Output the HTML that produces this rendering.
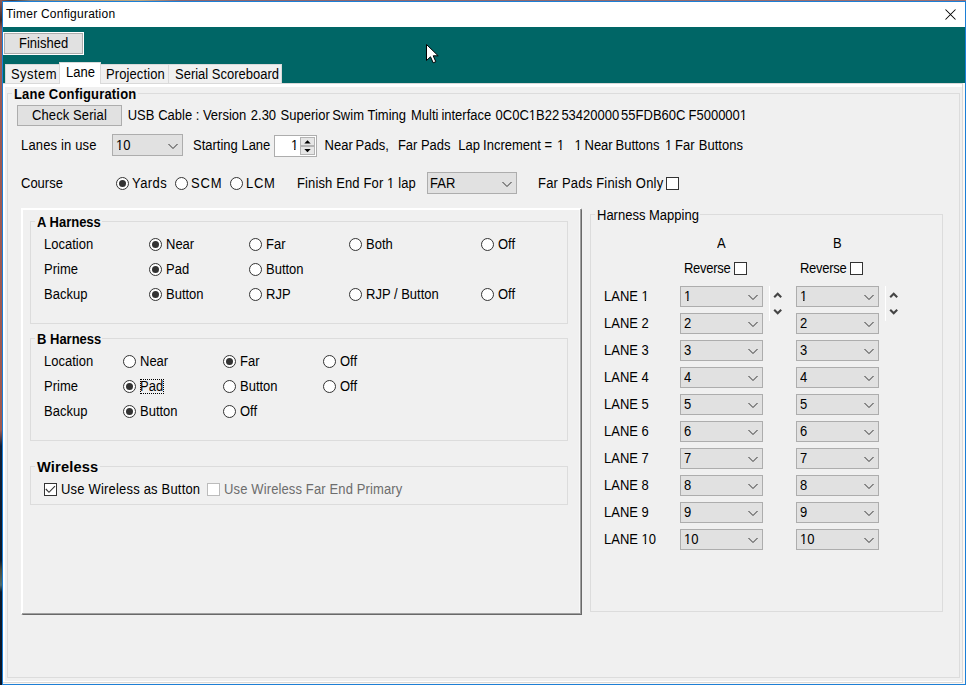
<!DOCTYPE html>
<html><head><meta charset="utf-8"><style>
html,body{margin:0;padding:0;}
body{width:966px;height:685px;position:relative;overflow:hidden;background:#f0f0f0;font-family:"Liberation Sans",sans-serif;font-size:13px;color:#000;}
.a{position:absolute;}
.t{position:absolute;white-space:pre;line-height:15px;font-size:13px;transform:scaleY(1.1);transform-origin:0 12px;}
.o{display:inline-block;clip-path:polygon(0 0,100% 0,100% 10.9px,4.5px 10.9px,4.5px 100%,3.2px 100%,3.2px 10.9px,0 10.9px);}
</style></head><body>

<div class="a" style="left:0px;top:0px;width:966px;height:1px;background:linear-gradient(90deg,#8a5a50 0px,#4a3a3a 12px,#808080 30px,#a89070 60px,#c0a880 140px,#8c6670 180px,#906a70 600px,#a07070 966px);"></div>
<div class="a" style="left:0px;top:0px;width:2px;height:685px;background:linear-gradient(180deg,#8f5a58 0px,#3a2a2a 20px,#9a5a55 30px,#a05a50 430px,#102038 446px,#0c1a2c 560px,#4a4a38 570px,#506a6a 585px,#0c1a2c 592px,#0a1628 685px);"></div>
<div class="a" style="left:2px;top:1px;width:964px;height:684px;box-sizing:border-box;border:1px solid #1c7fd6;"></div>
<div class="a" style="left:3px;top:2px;width:962px;height:25px;background:#fff;"></div>
<div class="t" style="left:6px;top:7px;font-size:12px;line-height:14px;transform:none;letter-spacing:0.23px;">Timer Configuration</div>
<svg class="a" style="left:944px;top:8px" width="13" height="13" viewBox="0 0 13 13"><path d="M1.5 1.5 L11.5 11.5 M11.5 1.5 L1.5 11.5" stroke="#000" stroke-width="1.05"/></svg>
<div class="a" style="left:3px;top:27px;width:962px;height:56px;background:#006666;"></div>
<div class="a" style="left:3px;top:32px;width:81px;height:23px;box-sizing:border-box;border:1px solid #fff;"></div>
<div class="a" style="left:4px;top:33px;width:79px;height:21px;box-sizing:border-box;border:1px solid #adadad;background:#e1e1e1;"></div>
<div class="t" style="left:19px;top:36px;">Finished</div>
<div class="a" style="left:5px;top:64px;width:55px;height:20px;box-sizing:border-box;border:1px solid #d9d9d9;border-right:none;background:#f0f0f0;"></div>
<div class="a" style="left:100px;top:64px;width:69px;height:20px;box-sizing:border-box;border:1px solid #d9d9d9;border-left:none;border-right:none;background:#f0f0f0;"></div>
<div class="a" style="left:168px;top:64px;width:114px;height:20px;box-sizing:border-box;border:1px solid #d9d9d9;background:#f0f0f0;"></div>
<div class="a" style="left:3px;top:83px;width:962px;height:601px;background:#fcf8f4;"></div>
<div class="a" style="left:3px;top:83px;width:960px;height:600px;box-sizing:border-box;border:1px solid #d9d9d9;border-left:none;"></div>
<div class="a" style="left:3px;top:84px;width:959px;height:598px;background:#fff;"></div>
<div class="a" style="left:5px;top:87px;width:957px;height:594px;background:#f0f0f0;"></div>
<div class="a" style="left:59px;top:62px;width:42px;height:22px;box-sizing:border-box;border:1px solid #d9d9d9;border-bottom:none;background:#fff;"></div>
<div class="a" style="left:60px;top:83px;width:40px;height:4px;background:#fff;"></div>
<div class="t" style="left:11px;top:67px;letter-spacing:0.45px;">System</div>
<div class="t" style="left:66px;top:65px;">Lane</div>
<div class="t" style="left:106px;top:67px;letter-spacing:0.1px;">Projection</div>
<div class="t" style="left:175px;top:67px;">Serial Scoreboard</div>
<div class="a" style="left:7px;top:93px;width:953px;height:585px;box-sizing:border-box;border:1px solid #dcdcdc;"></div>
<div class="a" style="left:12px;top:93px;width:126px;height:1px;background:#f0f0f0;"></div>
<div class="t" style="left:14px;top:87px;font-weight:700;letter-spacing:0.18px;">Lane Configuration</div>
<div class="a" style="left:17px;top:105px;width:105px;height:21px;box-sizing:border-box;border:1px solid #adadad;background:#e1e1e1;"></div>
<div class="t" style="left:32px;top:108px;letter-spacing:0.1px;">Check Serial</div>
<div class="t" style="left:127.7px;top:108px;">USB</div>
<div class="t" style="left:158.2px;top:108px;">Cable</div>
<div class="t" style="left:195.8px;top:108px;">:</div>
<div class="t" style="left:202.9px;top:108px;">Version</div>
<div class="t" style="left:250.8px;top:108px;">2.30</div>
<div class="t" style="left:280.6px;top:108px;">Superior</div>
<div class="t" style="left:332.2px;top:108px;">Swim</div>
<div class="t" style="left:367.5px;top:108px;">Timing</div>
<div class="t" style="left:411px;top:108px;">Multi</div>
<div class="t" style="left:441.4px;top:108px;">interface</div>
<div class="t" style="left:495.6px;top:108px;">0C0C<span class="o">1</span>B22</div>
<div class="t" style="left:561.4px;top:108px;">53420000</div>
<div class="t" style="left:621.1px;top:108px;">55FDB60C</div>
<div class="t" style="left:688.5px;top:108px;">F500000<span class="o">1</span></div>
<div class="t" style="left:21px;top:138px;letter-spacing:0.16px;">Lanes in use</div>
<div class="a" style="left:112px;top:134px;width:71px;height:22px;box-sizing:border-box;border:1px solid #adadad;background:#e1e1e1;"></div>
<svg class="a" style="left:168px;top:141.7px" width="10" height="8" viewBox="0 0 10 8"><path d="M0.5 2 L5 6.5 L9.5 2" fill="none" stroke="#333" stroke-width="1"/></svg>
<div class="t" style="left:116px;top:138px;"><span class="o">1</span>0</div>
<div class="t" style="left:193px;top:138px;">Starting Lane</div>
<div class="a" style="left:274px;top:135px;width:43px;height:22px;box-sizing:border-box;border:1px solid #adadad;background:#fff;"></div>
<div class="a" style="left:300px;top:137px;width:15px;height:9px;box-sizing:border-box;border:1px solid #b4b4b4;background:#e6e6e6;"></div>
<div class="a" style="left:300px;top:146px;width:15px;height:9px;box-sizing:border-box;border:1px solid #b4b4b4;background:#e6e6e6;"></div>
<svg class="a" style="left:300px;top:137px" width="15" height="18" viewBox="0 0 15 18"><path d="M4.3 6.5 L7.5 3.3 L10.7 6.5 Z" fill="#000"/><path d="M4.3 12 L7.5 15.2 L10.7 12 Z" fill="#000"/></svg>
<div class="t" style="left:291px;top:138px;"><span class="o">1</span></div>
<div class="t" style="left:324.6px;top:138px;">Near</div>
<div class="t" style="left:355.6px;top:138px;">Pads,</div>
<div class="t" style="left:397.9px;top:138px;">Far</div>
<div class="t" style="left:420.9px;top:138px;">Pads</div>
<div class="t" style="left:458.3px;top:138px;">Lap</div>
<div class="t" style="left:483.1px;top:138px;">Increment</div>
<div class="t" style="left:544.6px;top:138px;">=</div>
<div class="t" style="left:557px;top:138px;"><span class="o">1</span></div>
<div class="t" style="left:574.5px;top:138px;"><span class="o">1</span></div>
<div class="t" style="left:584.5px;top:138px;">Near</div>
<div class="t" style="left:615.5px;top:138px;">Buttons</div>
<div class="t" style="left:665px;top:138px;"><span class="o">1</span></div>
<div class="t" style="left:675.1px;top:138px;">Far</div>
<div class="t" style="left:698.8px;top:138px;">Buttons</div>
<div class="t" style="left:21px;top:176px;">Course</div>
<svg class="a" style="left:116px;top:177px" width="13" height="13" viewBox="0 0 13 13"><circle cx="6.5" cy="6.5" r="6" fill="#fff" stroke="#333" stroke-width="1"/><circle cx="6.5" cy="6.5" r="3.5" fill="#333"/></svg>
<div class="t" style="left:132px;top:176px;letter-spacing:0.45px;">Yards</div>
<svg class="a" style="left:175px;top:177px" width="13" height="13" viewBox="0 0 13 13"><circle cx="6.5" cy="6.5" r="6" fill="#fff" stroke="#333" stroke-width="1"/></svg>
<div class="t" style="left:191px;top:176px;letter-spacing:0.8px;">SCM</div>
<svg class="a" style="left:230px;top:177px" width="13" height="13" viewBox="0 0 13 13"><circle cx="6.5" cy="6.5" r="6" fill="#fff" stroke="#333" stroke-width="1"/></svg>
<div class="t" style="left:246px;top:176px;letter-spacing:0.7px;">LCM</div>
<div class="t" style="left:297px;top:176px;letter-spacing:0.13px;">Finish End For <span class="o">1</span> lap</div>
<div class="a" style="left:427px;top:172px;width:90px;height:22px;box-sizing:border-box;border:1px solid #adadad;background:#e1e1e1;"></div>
<svg class="a" style="left:502px;top:179.7px" width="10" height="8" viewBox="0 0 10 8"><path d="M0.5 2 L5 6.5 L9.5 2" fill="none" stroke="#333" stroke-width="1"/></svg>
<div class="t" style="left:430px;top:176px;">FAR</div>
<div class="t" style="left:538px;top:176px;letter-spacing:0.2px;">Far Pads Finish Only</div>
<svg class="a" style="left:666px;top:177px" width="13" height="13" viewBox="0 0 13 13"><rect x="0.5" y="0.5" width="12" height="12" fill="#fff" stroke="#333" stroke-width="1"/></svg>
<div class="a" style="left:21px;top:208px;width:561px;height:407px;box-sizing:border-box;border-top:2px solid #fff;border-left:2px solid #fff;border-right:1px solid #696969;border-bottom:1px solid #696969;"></div>
<div class="a" style="left:580px;top:209px;width:1px;height:405px;background:#a0a0a0;"></div>
<div class="a" style="left:22px;top:613px;width:559px;height:1px;background:#a0a0a0;"></div>
<div class="a" style="left:579px;top:210px;width:1px;height:403px;background:#f8f8f8;"></div>
<div class="a" style="left:30px;top:221px;width:538px;height:103px;box-sizing:border-box;border:1px solid #dcdcdc;"></div>
<div class="a" style="left:35px;top:221px;width:67px;height:1px;background:#f0f0f0;"></div>
<div class="t" style="left:37px;top:215px;font-weight:700;">A Harness</div>
<div class="t" style="left:44px;top:237px;">Location</div>
<div class="t" style="left:44px;top:262px;">Prime</div>
<div class="t" style="left:44px;top:287px;">Backup</div>
<svg class="a" style="left:149px;top:238px" width="13" height="13" viewBox="0 0 13 13"><circle cx="6.5" cy="6.5" r="6" fill="#fff" stroke="#333" stroke-width="1"/><circle cx="6.5" cy="6.5" r="3.5" fill="#333"/></svg>
<div class="t" style="left:166px;top:237px;">Near</div>
<svg class="a" style="left:249px;top:238px" width="13" height="13" viewBox="0 0 13 13"><circle cx="6.5" cy="6.5" r="6" fill="#fff" stroke="#333" stroke-width="1"/></svg>
<div class="t" style="left:266px;top:237px;">Far</div>
<svg class="a" style="left:349px;top:238px" width="13" height="13" viewBox="0 0 13 13"><circle cx="6.5" cy="6.5" r="6" fill="#fff" stroke="#333" stroke-width="1"/></svg>
<div class="t" style="left:366px;top:237px;">Both</div>
<svg class="a" style="left:481px;top:238px" width="13" height="13" viewBox="0 0 13 13"><circle cx="6.5" cy="6.5" r="6" fill="#fff" stroke="#333" stroke-width="1"/></svg>
<div class="t" style="left:498px;top:237px;">Off</div>
<svg class="a" style="left:149px;top:263px" width="13" height="13" viewBox="0 0 13 13"><circle cx="6.5" cy="6.5" r="6" fill="#fff" stroke="#333" stroke-width="1"/><circle cx="6.5" cy="6.5" r="3.5" fill="#333"/></svg>
<div class="t" style="left:166px;top:262px;">Pad</div>
<svg class="a" style="left:249px;top:263px" width="13" height="13" viewBox="0 0 13 13"><circle cx="6.5" cy="6.5" r="6" fill="#fff" stroke="#333" stroke-width="1"/></svg>
<div class="t" style="left:266px;top:262px;">Button</div>
<svg class="a" style="left:149px;top:288px" width="13" height="13" viewBox="0 0 13 13"><circle cx="6.5" cy="6.5" r="6" fill="#fff" stroke="#333" stroke-width="1"/><circle cx="6.5" cy="6.5" r="3.5" fill="#333"/></svg>
<div class="t" style="left:166px;top:287px;">Button</div>
<svg class="a" style="left:249px;top:288px" width="13" height="13" viewBox="0 0 13 13"><circle cx="6.5" cy="6.5" r="6" fill="#fff" stroke="#333" stroke-width="1"/></svg>
<div class="t" style="left:266px;top:287px;">RJP</div>
<svg class="a" style="left:349px;top:288px" width="13" height="13" viewBox="0 0 13 13"><circle cx="6.5" cy="6.5" r="6" fill="#fff" stroke="#333" stroke-width="1"/></svg>
<div class="t" style="left:366px;top:287px;">RJP / Button</div>
<svg class="a" style="left:481px;top:288px" width="13" height="13" viewBox="0 0 13 13"><circle cx="6.5" cy="6.5" r="6" fill="#fff" stroke="#333" stroke-width="1"/></svg>
<div class="t" style="left:498px;top:287px;">Off</div>
<div class="a" style="left:30px;top:338px;width:538px;height:103px;box-sizing:border-box;border:1px solid #dcdcdc;"></div>
<div class="a" style="left:35px;top:338px;width:67px;height:1px;background:#f0f0f0;"></div>
<div class="t" style="left:37px;top:332px;font-weight:700;">B Harness</div>
<div class="t" style="left:44px;top:354px;">Location</div>
<div class="t" style="left:44px;top:379px;">Prime</div>
<div class="t" style="left:44px;top:404px;">Backup</div>
<svg class="a" style="left:123px;top:355px" width="13" height="13" viewBox="0 0 13 13"><circle cx="6.5" cy="6.5" r="6" fill="#fff" stroke="#333" stroke-width="1"/></svg>
<div class="t" style="left:140px;top:354px;">Near</div>
<svg class="a" style="left:223px;top:355px" width="13" height="13" viewBox="0 0 13 13"><circle cx="6.5" cy="6.5" r="6" fill="#fff" stroke="#333" stroke-width="1"/><circle cx="6.5" cy="6.5" r="3.5" fill="#333"/></svg>
<div class="t" style="left:240px;top:354px;">Far</div>
<svg class="a" style="left:323px;top:355px" width="13" height="13" viewBox="0 0 13 13"><circle cx="6.5" cy="6.5" r="6" fill="#fff" stroke="#333" stroke-width="1"/></svg>
<div class="t" style="left:340px;top:354px;">Off</div>
<svg class="a" style="left:123px;top:380px" width="13" height="13" viewBox="0 0 13 13"><circle cx="6.5" cy="6.5" r="6" fill="#fff" stroke="#333" stroke-width="1"/><circle cx="6.5" cy="6.5" r="3.5" fill="#333"/></svg>
<div class="t" style="left:140px;top:379px;">Pad</div>
<svg class="a" style="left:223px;top:380px" width="13" height="13" viewBox="0 0 13 13"><circle cx="6.5" cy="6.5" r="6" fill="#fff" stroke="#333" stroke-width="1"/></svg>
<div class="t" style="left:240px;top:379px;">Button</div>
<svg class="a" style="left:323px;top:380px" width="13" height="13" viewBox="0 0 13 13"><circle cx="6.5" cy="6.5" r="6" fill="#fff" stroke="#333" stroke-width="1"/></svg>
<div class="t" style="left:340px;top:379px;">Off</div>
<svg class="a" style="left:123px;top:405px" width="13" height="13" viewBox="0 0 13 13"><circle cx="6.5" cy="6.5" r="6" fill="#fff" stroke="#333" stroke-width="1"/><circle cx="6.5" cy="6.5" r="3.5" fill="#333"/></svg>
<div class="t" style="left:140px;top:404px;">Button</div>
<svg class="a" style="left:223px;top:405px" width="13" height="13" viewBox="0 0 13 13"><circle cx="6.5" cy="6.5" r="6" fill="#fff" stroke="#333" stroke-width="1"/></svg>
<div class="t" style="left:240px;top:404px;">Off</div>
<div class="a" style="left:140px;top:379px;width:22px;height:13px;border:1px dotted #000;"></div>
<div class="a" style="left:30px;top:466px;width:538px;height:39px;box-sizing:border-box;border:1px solid #dcdcdc;"></div>
<div class="a" style="left:35px;top:466px;width:65px;height:1px;background:#f0f0f0;"></div>
<div class="t" style="left:37px;top:459px;font-size:14.67px;line-height:16px;transform:none;font-weight:700;letter-spacing:0.15px;">Wireless</div>
<svg class="a" style="left:44px;top:483px" width="13" height="13" viewBox="0 0 13 13"><rect x="0.5" y="0.5" width="12" height="12" fill="#fff" stroke="#333" stroke-width="1"/><path d="M1.8 6 L5 9.3 L11 3.2" fill="none" stroke="#333" stroke-width="1.15"/></svg>
<div class="t" style="left:61px;top:482px;letter-spacing:0.19px;">Use Wireless as Button</div>
<svg class="a" style="left:207px;top:483px" width="13" height="13" viewBox="0 0 13 13"><rect x="0.5" y="0.5" width="12" height="12" fill="#fff" stroke="#bcbcbc" stroke-width="1"/></svg>
<div class="t" style="left:224px;top:482px;color:#6d6d6d;letter-spacing:0.13px;">Use Wireless Far End Primary</div>
<div class="a" style="left:590px;top:214px;width:353px;height:398px;box-sizing:border-box;border:1px solid #dcdcdc;"></div>
<div class="a" style="left:595px;top:214px;width:105px;height:1px;background:#f0f0f0;"></div>
<div class="t" style="left:597px;top:208px;">Harness Mapping</div>
<div class="t" style="left:717px;top:236px;">A</div>
<div class="t" style="left:833px;top:236px;">B</div>
<div class="t" style="left:684px;top:261px;letter-spacing:-0.3px;">Reverse</div>
<svg class="a" style="left:734px;top:262px" width="13" height="13" viewBox="0 0 13 13"><rect x="0.5" y="0.5" width="12" height="12" fill="#fff" stroke="#333" stroke-width="1"/></svg>
<div class="t" style="left:800px;top:261px;letter-spacing:-0.3px;">Reverse</div>
<svg class="a" style="left:850px;top:262px" width="13" height="13" viewBox="0 0 13 13"><rect x="0.5" y="0.5" width="12" height="12" fill="#fff" stroke="#333" stroke-width="1"/></svg>
<div class="t" style="left:604px;top:289px;">LANE <span class="o">1</span></div>
<div class="a" style="left:680px;top:286px;width:83px;height:21px;box-sizing:border-box;border:1px solid #adadad;background:#e1e1e1;"></div>
<svg class="a" style="left:748px;top:293.2px" width="10" height="8" viewBox="0 0 10 8"><path d="M0.5 2 L5 6.5 L9.5 2" fill="none" stroke="#333" stroke-width="1"/></svg>
<div class="t" style="left:684px;top:289px;"><span class="o">1</span></div>
<div class="a" style="left:796px;top:286px;width:83px;height:21px;box-sizing:border-box;border:1px solid #adadad;background:#e1e1e1;"></div>
<svg class="a" style="left:864px;top:293.2px" width="10" height="8" viewBox="0 0 10 8"><path d="M0.5 2 L5 6.5 L9.5 2" fill="none" stroke="#333" stroke-width="1"/></svg>
<div class="t" style="left:800px;top:289px;"><span class="o">1</span></div>
<div class="t" style="left:604px;top:316px;">LANE 2</div>
<div class="a" style="left:680px;top:313px;width:83px;height:21px;box-sizing:border-box;border:1px solid #adadad;background:#e1e1e1;"></div>
<svg class="a" style="left:748px;top:320.2px" width="10" height="8" viewBox="0 0 10 8"><path d="M0.5 2 L5 6.5 L9.5 2" fill="none" stroke="#333" stroke-width="1"/></svg>
<div class="t" style="left:684px;top:316px;">2</div>
<div class="a" style="left:796px;top:313px;width:83px;height:21px;box-sizing:border-box;border:1px solid #adadad;background:#e1e1e1;"></div>
<svg class="a" style="left:864px;top:320.2px" width="10" height="8" viewBox="0 0 10 8"><path d="M0.5 2 L5 6.5 L9.5 2" fill="none" stroke="#333" stroke-width="1"/></svg>
<div class="t" style="left:800px;top:316px;">2</div>
<div class="t" style="left:604px;top:343px;">LANE 3</div>
<div class="a" style="left:680px;top:340px;width:83px;height:21px;box-sizing:border-box;border:1px solid #adadad;background:#e1e1e1;"></div>
<svg class="a" style="left:748px;top:347.2px" width="10" height="8" viewBox="0 0 10 8"><path d="M0.5 2 L5 6.5 L9.5 2" fill="none" stroke="#333" stroke-width="1"/></svg>
<div class="t" style="left:684px;top:343px;">3</div>
<div class="a" style="left:796px;top:340px;width:83px;height:21px;box-sizing:border-box;border:1px solid #adadad;background:#e1e1e1;"></div>
<svg class="a" style="left:864px;top:347.2px" width="10" height="8" viewBox="0 0 10 8"><path d="M0.5 2 L5 6.5 L9.5 2" fill="none" stroke="#333" stroke-width="1"/></svg>
<div class="t" style="left:800px;top:343px;">3</div>
<div class="t" style="left:604px;top:370px;">LANE 4</div>
<div class="a" style="left:680px;top:367px;width:83px;height:21px;box-sizing:border-box;border:1px solid #adadad;background:#e1e1e1;"></div>
<svg class="a" style="left:748px;top:374.2px" width="10" height="8" viewBox="0 0 10 8"><path d="M0.5 2 L5 6.5 L9.5 2" fill="none" stroke="#333" stroke-width="1"/></svg>
<div class="t" style="left:684px;top:370px;">4</div>
<div class="a" style="left:796px;top:367px;width:83px;height:21px;box-sizing:border-box;border:1px solid #adadad;background:#e1e1e1;"></div>
<svg class="a" style="left:864px;top:374.2px" width="10" height="8" viewBox="0 0 10 8"><path d="M0.5 2 L5 6.5 L9.5 2" fill="none" stroke="#333" stroke-width="1"/></svg>
<div class="t" style="left:800px;top:370px;">4</div>
<div class="t" style="left:604px;top:397px;">LANE 5</div>
<div class="a" style="left:680px;top:394px;width:83px;height:21px;box-sizing:border-box;border:1px solid #adadad;background:#e1e1e1;"></div>
<svg class="a" style="left:748px;top:401.2px" width="10" height="8" viewBox="0 0 10 8"><path d="M0.5 2 L5 6.5 L9.5 2" fill="none" stroke="#333" stroke-width="1"/></svg>
<div class="t" style="left:684px;top:397px;">5</div>
<div class="a" style="left:796px;top:394px;width:83px;height:21px;box-sizing:border-box;border:1px solid #adadad;background:#e1e1e1;"></div>
<svg class="a" style="left:864px;top:401.2px" width="10" height="8" viewBox="0 0 10 8"><path d="M0.5 2 L5 6.5 L9.5 2" fill="none" stroke="#333" stroke-width="1"/></svg>
<div class="t" style="left:800px;top:397px;">5</div>
<div class="t" style="left:604px;top:424px;">LANE 6</div>
<div class="a" style="left:680px;top:421px;width:83px;height:21px;box-sizing:border-box;border:1px solid #adadad;background:#e1e1e1;"></div>
<svg class="a" style="left:748px;top:428.2px" width="10" height="8" viewBox="0 0 10 8"><path d="M0.5 2 L5 6.5 L9.5 2" fill="none" stroke="#333" stroke-width="1"/></svg>
<div class="t" style="left:684px;top:424px;">6</div>
<div class="a" style="left:796px;top:421px;width:83px;height:21px;box-sizing:border-box;border:1px solid #adadad;background:#e1e1e1;"></div>
<svg class="a" style="left:864px;top:428.2px" width="10" height="8" viewBox="0 0 10 8"><path d="M0.5 2 L5 6.5 L9.5 2" fill="none" stroke="#333" stroke-width="1"/></svg>
<div class="t" style="left:800px;top:424px;">6</div>
<div class="t" style="left:604px;top:451px;">LANE 7</div>
<div class="a" style="left:680px;top:448px;width:83px;height:21px;box-sizing:border-box;border:1px solid #adadad;background:#e1e1e1;"></div>
<svg class="a" style="left:748px;top:455.2px" width="10" height="8" viewBox="0 0 10 8"><path d="M0.5 2 L5 6.5 L9.5 2" fill="none" stroke="#333" stroke-width="1"/></svg>
<div class="t" style="left:684px;top:451px;">7</div>
<div class="a" style="left:796px;top:448px;width:83px;height:21px;box-sizing:border-box;border:1px solid #adadad;background:#e1e1e1;"></div>
<svg class="a" style="left:864px;top:455.2px" width="10" height="8" viewBox="0 0 10 8"><path d="M0.5 2 L5 6.5 L9.5 2" fill="none" stroke="#333" stroke-width="1"/></svg>
<div class="t" style="left:800px;top:451px;">7</div>
<div class="t" style="left:604px;top:478px;">LANE 8</div>
<div class="a" style="left:680px;top:475px;width:83px;height:21px;box-sizing:border-box;border:1px solid #adadad;background:#e1e1e1;"></div>
<svg class="a" style="left:748px;top:482.2px" width="10" height="8" viewBox="0 0 10 8"><path d="M0.5 2 L5 6.5 L9.5 2" fill="none" stroke="#333" stroke-width="1"/></svg>
<div class="t" style="left:684px;top:478px;">8</div>
<div class="a" style="left:796px;top:475px;width:83px;height:21px;box-sizing:border-box;border:1px solid #adadad;background:#e1e1e1;"></div>
<svg class="a" style="left:864px;top:482.2px" width="10" height="8" viewBox="0 0 10 8"><path d="M0.5 2 L5 6.5 L9.5 2" fill="none" stroke="#333" stroke-width="1"/></svg>
<div class="t" style="left:800px;top:478px;">8</div>
<div class="t" style="left:604px;top:505px;">LANE 9</div>
<div class="a" style="left:680px;top:502px;width:83px;height:21px;box-sizing:border-box;border:1px solid #adadad;background:#e1e1e1;"></div>
<svg class="a" style="left:748px;top:509.20000000000005px" width="10" height="8" viewBox="0 0 10 8"><path d="M0.5 2 L5 6.5 L9.5 2" fill="none" stroke="#333" stroke-width="1"/></svg>
<div class="t" style="left:684px;top:505px;">9</div>
<div class="a" style="left:796px;top:502px;width:83px;height:21px;box-sizing:border-box;border:1px solid #adadad;background:#e1e1e1;"></div>
<svg class="a" style="left:864px;top:509.20000000000005px" width="10" height="8" viewBox="0 0 10 8"><path d="M0.5 2 L5 6.5 L9.5 2" fill="none" stroke="#333" stroke-width="1"/></svg>
<div class="t" style="left:800px;top:505px;">9</div>
<div class="t" style="left:604px;top:532px;">LANE <span class="o">1</span>0</div>
<div class="a" style="left:680px;top:529px;width:83px;height:21px;box-sizing:border-box;border:1px solid #adadad;background:#e1e1e1;"></div>
<svg class="a" style="left:748px;top:536.2px" width="10" height="8" viewBox="0 0 10 8"><path d="M0.5 2 L5 6.5 L9.5 2" fill="none" stroke="#333" stroke-width="1"/></svg>
<div class="t" style="left:684px;top:532px;"><span class="o">1</span>0</div>
<div class="a" style="left:796px;top:529px;width:83px;height:21px;box-sizing:border-box;border:1px solid #adadad;background:#e1e1e1;"></div>
<svg class="a" style="left:864px;top:536.2px" width="10" height="8" viewBox="0 0 10 8"><path d="M0.5 2 L5 6.5 L9.5 2" fill="none" stroke="#333" stroke-width="1"/></svg>
<div class="t" style="left:800px;top:532px;"><span class="o">1</span>0</div>
<div class="a" style="left:769px;top:286px;width:1px;height:35px;background:#fff;"></div>
<svg class="a" style="left:773px;top:290px" width="10" height="28" viewBox="0 0 10 28"><path d="M1.2 7.3 L4.7 3.8 L8.2 7.3" fill="none" stroke="#444" stroke-width="2.1"/><path d="M1.2 19.7 L4.7 23.2 L8.2 19.7" fill="none" stroke="#444" stroke-width="2.1"/></svg>
<div class="a" style="left:885px;top:286px;width:1px;height:35px;background:#fff;"></div>
<svg class="a" style="left:889px;top:290px" width="10" height="28" viewBox="0 0 10 28"><path d="M1.2 7.3 L4.7 3.8 L8.2 7.3" fill="none" stroke="#444" stroke-width="2.1"/><path d="M1.2 19.7 L4.7 23.2 L8.2 19.7" fill="none" stroke="#444" stroke-width="2.1"/></svg>
<svg class="a" style="left:425px;top:43px" width="16" height="22" viewBox="0 0 16 22"><path d="M1.5 1.5 L1.5 17.5 L5.5 13.8 L8.2 19.8 L10.8 18.7 L8.2 12.8 L13.2 12.8 Z" fill="#fff" stroke="#000" stroke-width="1" stroke-linejoin="miter"/></svg>
</body></html>
